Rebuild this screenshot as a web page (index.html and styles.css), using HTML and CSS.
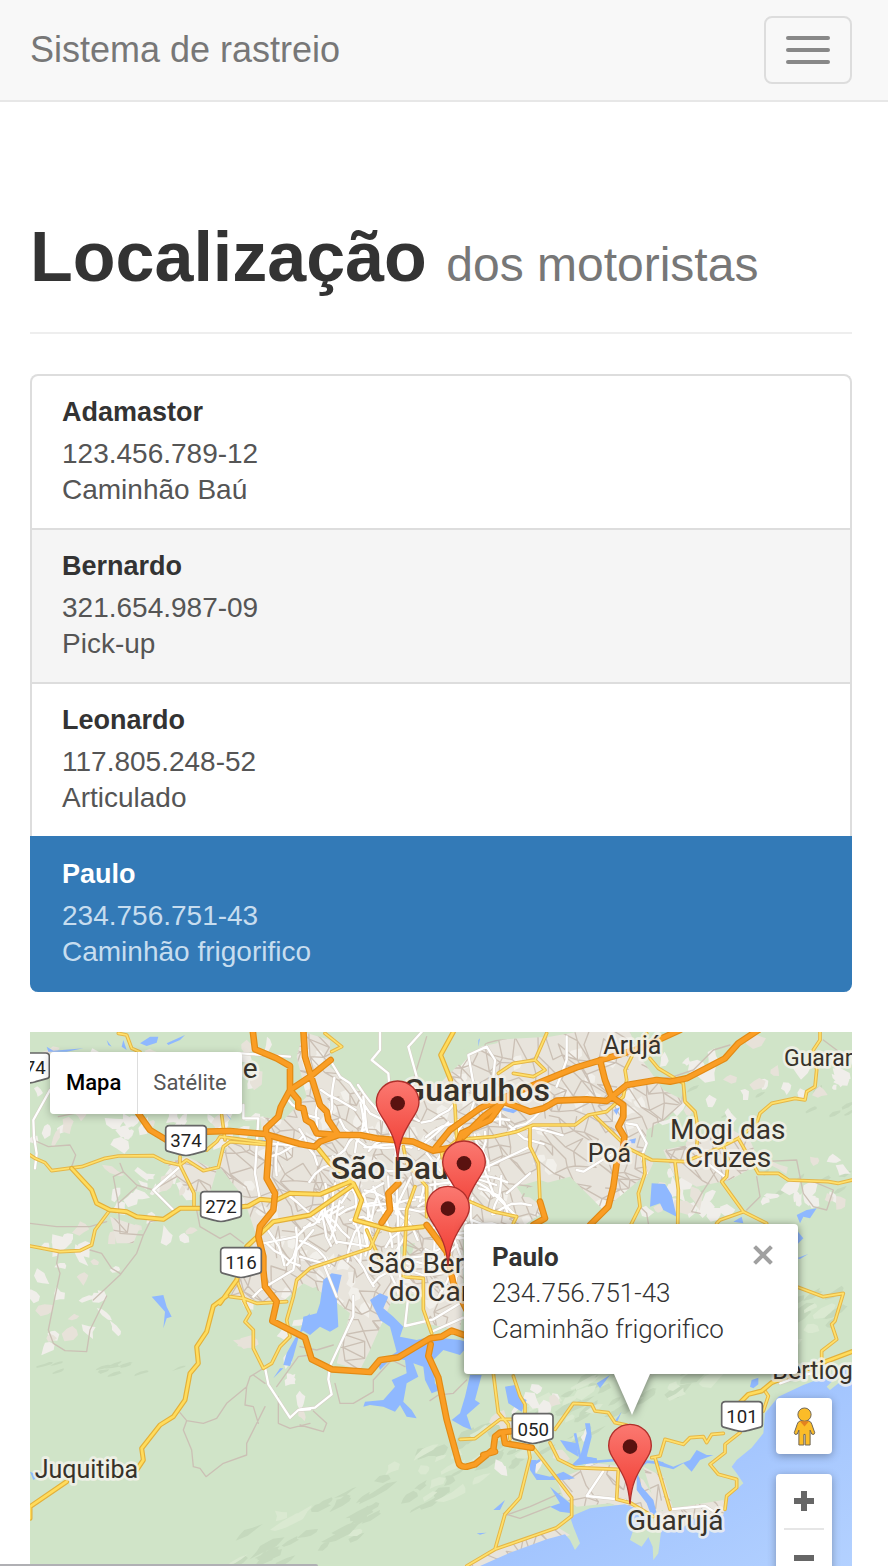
FILE: index.html
```html
<!DOCTYPE html>
<html lang="pt-BR">
<head>
<meta charset="utf-8">
<meta name="viewport" content="width=device-width, initial-scale=1">
<title>Sistema de rastreio</title>
<link rel="stylesheet" href="styles.css">
</head>
<body>
<nav class="navbar">
  <a class="brand" href="#">Sistema de rastreio</a>
  <button class="toggle" type="button" aria-label="Abrir menu"><span class="bar"></span><span class="bar"></span><span class="bar"></span></button>
</nav>
<main class="container">
  <header class="page-header">
    <h1 class="title">Localização <small class="subtitle">dos motoristas</small></h1>
  </header>
  <div class="drivers">
    <a class="driver" href="#"><h4 class="name">Adamastor</h4><p class="info">123.456.789-12<br>Caminhão Baú</p></a>
    <a class="driver hovered" href="#"><h4 class="name">Bernardo</h4><p class="info">321.654.987-09<br>Pick-up</p></a>
    <a class="driver" href="#"><h4 class="name">Leonardo</h4><p class="info">117.805.248-52<br>Articulado</p></a>
    <a class="driver active" href="#"><h4 class="name">Paulo</h4><p class="info">234.756.751-43<br>Caminhão frigorifico</p></a>
  </div>
  <section class="map" aria-label="Mapa">
    <svg class="tiles" viewBox="0 6 2466 1602" preserveAspectRatio="xMinYMin slice">
      <defs>
        <path id="metro" d="M560 400L600 340 700 330 690 260 760 270 830 200 800 80 820 6 900 30 900 110 1010 200 1060 260 1110 160 1230 160 1300 90 1380 30 1560 20 1640 6 1800 6 1830 80 1900 180 1960 210 1900 270 1850 300 1840 440 1720 540 1620 440 1470 480 1550 540 1460 600 1300 600 1300 830 1290 900 1180 880 1180 800 1100 780 1020 960 990 1020 920 1000 960 850 900 800 820 760 740 830 640 800 600 800 680 620 640 500z"/>
        <path id="towns" d="M410 400L470 380 560 420 540 490 470 480zM1900 360L2000 340 2090 290 2160 330 2190 400 2100 450 2000 470 1930 430zM240 560L330 590 310 640 260 640zM1580 1350L1700 1300 1780 1310 1840 1350 1900 1450 1880 1470 1740 1420 1640 1430 1600 1400zM1900 1440L2080 1410 2090 1450 1990 1500 1880 1530 1850 1500zM1300 1608L1390 1560 1580 1490 1620 1515 1500 1560 1380 1608zM1840 1310L1900 1340 1930 1440 1880 1440z"/>
        <clipPath id="urban"><use href="#metro"/></clipPath>
        <clipPath id="town-clip"><use href="#towns"/></clipPath>
        <linearGradient id="sea" x1="0" y1="0" x2="1" y2="1"><stop offset="0" stop-color="#8fb8ff"/><stop offset=".6" stop-color="#a6c7fe"/><stop offset="1" stop-color="#b3d1ff"/></linearGradient>
        <linearGradient id="red" x1="0" y1="0" x2="0" y2="1"><stop offset="0" stop-color="#fb7971"/><stop offset="1" stop-color="#f0392f"/></linearGradient>
        <g id="pin"><path d="M0 172C-5 110-20 85-40 52-55 28-64 15-64-3A64 64 0 0 1 64-3C64 15 55 28 40 52 20 85 5 110 0 172Z" fill="url(#red)" stroke="#b02f2b" stroke-width="4"/><circle r="22" fill="#5a1210"/></g>
        <path id="shield" d="M-61-34Q-61-45-50-45H50Q61-45 61-34V24Q61 30 53 32L20 41Q0 48-20 41L-53 32Q-61 30-61 24Z" fill="#fff" stroke="#666" stroke-width="5"/>
        <g id="rural">
          <path d="M85 260L160 245M10 330L55 350 120 345 137 375 125 410M250 440L280 425 270 400M250 440L265 520 320 470M280 425L320 465 370 480 440 440M265 520L270 610 340 615 360 575 400 568M340 615L320 670 270 735 190 810M0 580L80 590 180 590 230 575M500 540L510 590 570 625 600 610 640 640M180 660L215 670 245 715 270 730M85 670L80 700 90 730 75 800 55 900 70 940 105 962 170 965 180 900 230 798M450 1148L470 1172 520 1180 560 1165 590 1120 650 1070 660 1040 700 1015M470 1172L460 1200 485 1260 490 1310 510 1315 528 1340 580 1300 650 1275 650 1240 705 1130M650 1070L645 1125 670 1130 685 1180M745 1100L745 1180 780 1195 840 1180M740 1070L805 980 840 975M670 1035L705 1060M810 950L860 960 910 945M915 1060L930 1120 970 1120 1030 1085 1030 1050 1085 990 1125 1010M850 1143L890 1180 880 1205 810 1185M1200 1112L1225 1095 1270 1090 1310 1050M1190 20L1150 150M1860 150L1930 140 1990 120 2050 60 2100 45M1960 180L1955 220 1900 270 1870 280 1865 320M1920 390L1935 360 2010 350M2060 420L2015 490 1985 545 2010 550M2180 440L2190 500 2150 540M2190 395L2300 390 2320 490 2350 530 2390 540 2410 480 2350 455M1830 530L1850 550 1855 580M1430 1455L1500 1430 1590 1390M1420 1450L1470 1465 1560 1430M2380 30L2440 75"/>
        </g>
        <g id="local">
          <path d="M60 180L10 270 12 320 20 370 15 415M450 410L370 480 385 495 430 540M630 70L780 80M640 225L640 265 685 265 675 430 690 510M700 640L800 620 840 580M670 800L690 780 790 720 800 660 850 600M970 798L970 858 900 1008 895 1048 905 1093 855 1133 810 1138M705 1013L715 1063 780 1163 805 1140 840 1138M1050 6L1050 60 1025 90 1075 130 1080 190M1175 6L1135 50 1160 140 1130 200M1330 160L1315 75 1370 50 1395 90 1390 140M1610 20L1610 90 1580 170M1135 798L1125 888 1210 868 1290 820M1210 903L1300 863M1720 1323L1670 1398 1785 1410M1920 1438L2025 1428 2060 1450M1640 420L1660 425 1750 370M1790 280L1820 285 1850 340 1835 380 1850 430M2000 340L2020 390 2090 445M2250 1060L2320 1035 2345 1030M900 90L930 140 960 160 1020 250 1080 280M1000 200L1010 300M1100 460L1110 760M1110 760L1180 800M1190 370L1270 470 1270 620 1300 700M1310 380L1360 410 1390 490 1460 560M1500 430L1430 490M1330 430L1500 350M920 635L1020 650M810 680L880 700 920 800M720 340L830 350"/>
          <path d="M990 500L1060 460M995 530L1080 520M1000 490L1020 560M1030 470L1060 550M1050 590L1000 560 960 570M920 640L890 560 940 530"/>
        </g>
        <g id="yellow">
          <path d="M0 375L15 385 45 398 65 422 155 410 225 385 265 378 370 377 405 395 450 405 470 390 520 422 565 412 580 350 600 335 720 345M0 648L90 665 150 662 185 645 195 600 240 540M450 380V405L492 490V535M575 255L585 330M530 360L560 335 570 320 720 340M265 10L290 15 305 55 330 66"/>
          <path d="M620 750L645 815M600 800L640 805 680 820 770 815M640 810L660 850 645 875 670 900 670 955 700 1015 725 1000 750 950 780 920 770 870 790 800 800 750 840 715 1020 655 1050 590"/>
          <path d="M1262 150L1275 230 1280 330 1235 370 1245 430M1550 10L1515 90 1545 120 1510 140 1450 130M1515 90L1450 100 1405 130M905 65L935 50 885 10M1290 328L1390 320 1460 305 1510 285 1635 285 1675 255 1730 245 1780 200 1790 150 1785 120 1810 70 1850 10M1500 290L1500 350 1525 400 1530 515M1120 350L1130 400 1190 470 1190 560M1155 470L1130 540 1120 740 1180 745 1180 838 1205 910M1320 515L1390 545 1460 560 1450 580M1010 600L1050 690"/>
          <path d="M1860 85L1885 115 1960 160 1965 215 1995 245 2005 300 2000 350M1785 350L1865 390 1965 395 2075 350 2125 325 2185 430 2245 430 2275 450 2395 455 2425 460 2466 450M2370 6V30L2350 60 2360 120 2355 170 2330 185 2325 210 2295 205 2225 220 2190 250 2180 280 2125 325M1935 395L1945 480 1943 590M1840 375L1845 430 1825 490 1830 530 1800 590M2080 350L2095 390 2090 440 2075 455 2140 545 2070 570 2060 580M2140 545L2210 580M1695 258L1785 345M2300 770L2380 800 2440 790 2415 873 2405 883 2420 928 2375 963V988M2205 1083L2215 1098 2200 1143"/>
          <path d="M1390 1030L1405 1148 1435 1183 1440 1228M1450 1038L1470 1098 1485 1123V1153M1290 1228L1335 1226 1410 1168 1450 1168M1575 1198L1630 1120 1685 1123 1695 1143 1735 1148 1755 1178 1790 1185M1495 1253L1500 1283 1470 1403 1425 1453 1395 1558M1310 1608L1395 1558 1580 1493 1625 1458V1403L1510 1253M1560 1238L1585 1288 1635 1313 1765 1318 1760 1408 1800 1418 1870 1460M1865 1283L1890 1278 1905 1228 1960 1243 1980 1223 2020 1220 2030 1238 2045 1213 2080 1210M2130 1208L2085 1243V1268L2040 1303 2065 1333 2120 1348V1373L2090 1398 2085 1438M1875 1283L1920 1438"/>
        </g>
        <g id="trunk">
          <path d="M125 415L185 480 200 520 240 540 290 545 320 560 400 568 450 535 510 535M635 530L655 528 690 508 735 512 780 490 870 493 960 455M570 820L620 750 650 650 730 575 840 555 970 465M590 798L550 828 530 905 500 950 505 1000 480 1030 465 1110 430 1160 390 1185 335 1255 340 1290 320 1320M110 1355L0 1430V1465M1270 6L1232 75 1262 150M860 350L900 400 970 460 995 510 975 570 1085 600 1180 590M2466 965L2365 1003 2225 1058 2195 1083 2155 1093 2130 1118"/>
        </g>
        <g id="highway">
          <path d="M668 0L675 58 740 85 780 108V180L752 232 745 260 708 295V310L718 330 710 445 735 490 730 540 690 590 685 620 700 680V720L705 770 740 815 727 873 825 923 845 988 905 1018 1020 1026 1050 990 1105 982 1200 925 1235 920 1265 902 1310 918M820 0L825 80 850 160 870 225 890 245 895 270 925 315M780 180L840 140 902 90M780 180L805 210V232L820 235 828 270 845 280 860 310 925 315M325 250L360 300 410 330M530 305L600 303 705 312 810 342 855 350 870 335 925 315 990 315 1040 325 1150 335 1210 362 1280 350 1295 310 1380 270 1420 215 1500 245 1540 235 1580 212 1670 208 1730 213 1790 165 1880 150 1920 155 1970 145 2085 85 2125 40 2185 0M1210 362L1260 300 1350 235 1450 190 1640 112 1720 88 1830 55 1950 0M1300 320L1360 260 1440 200M1710 90L1725 150 1745 200 1780 225V260L1765 290 1783 320 1780 350 1760 400 1750 470 1735 530 1680 585M1105 460L1075 490 1080 540 1055 578M1190 585L1250 665 1270 760 1310 840M1530 515L1545 565 1510 585M1202 943L1195 978 1225 1043 1250 1168 1285 1295Q1288 1312 1310 1310L1335 1303 1390 1258 1395 1220 1410 1208 1450 1203M1420 1213L1425 1240 1505 1253M1360 1275L1395 1265"/>
        </g>
      </defs>
      <rect y="6" width="2466" height="1602" fill="#d0e4c8"/>
      <g id="terrain"></g>
      <g id="patches"></g>
      <use href="#metro" fill="#e8e4dc"/><use href="#towns" fill="#e8e4dc"/>
      <g id="blocks" clip-path="url(#urban)"></g>
      <path d="M900 110L1010 200 1060 270 1110 160 1210 170 1180 6H920zM1460 470L1530 450 1620 480 1590 510 1480 500zM1300 60L1380 6H1440L1400 40zM1110 640L1155 640 1140 690 1110 670zM830 780L860 770 880 800 830 800zM1350 40L1290 110 1270 90zM700 80L800 130 760 250 690 260z" fill="#d0e4c8"/>
      <g class="rural-line"><use href="#rural"/></g>
      <g id="streets" class="rural-line" clip-path="url(#urban)"></g>
      <g id="town-streets" class="rural-line" clip-path="url(#town-clip)"></g>
      <path class="sea" d="M1350 1608L1440 1568 1550 1528 1605 1513 1620 1530 1635 1560 1650 1540 1630 1490 1620 1460 1680 1435 1785 1423 1830 1440 1870 1462 1810 1500 1800 1530 1835 1550 1870 1500 1950 1500 2000 1460 2080 1455 2095 1400 2140 1360 2120 1330 2105 1310 2120 1290 2165 1253 2200 1210 2205 1150 2245 1100 2320 1065 2466 1010V1608z"/>
      <path d="M1848 1505L1895 1490 1885 1570 1870 1590 1868 1550zM2390 1070L2430 1030 2450 1040 2400 1080z" fill="#d0e4c8"/>
      <g class="water">
        <path d="M880 750L905 730 935 735 920 800 925 890 900 905 870 890 840 915 815 900 820 860 860 850 870 820zM1020 810L1050 790 1075 800 1060 835 1090 860 1120 890 1110 920 1160 930 1200 920 1290 930 1320 940 1290 975 1240 960 1210 990 1215 1060 1230 1080 1205 1090 1185 1050 1180 1010 1150 1000 1165 1040 1130 1060 1120 1115 1145 1140 1160 1165 1130 1160 1110 1125 1095 1145 1060 1130 1020 1125 1000 1130 1005 1115 1060 1110 1095 1070 1085 1050 1130 1030 1125 990 1085 985 1050 1020 1045 1005 1100 965 1080 890 1050 870z"/>
        <path d="M1320 1035L1355 1035 1335 1110 1350 1120 1310 1155 1325 1200 1300 1190 1265 1170 1290 1150 1305 1100zM1425 1070L1455 1065 1470 1100 1490 1110 1475 1145 1435 1120zM840 850L820 870 790 980 780 1008 760 1005 770 970 795 925 830 890zM760 1015L730 1045 750 1015zM365 800L400 795 410 830 425 860 410 865 400 895 405 845zM330 40L360 20H385L380 38 350 48zM410 40L465 15 450 30 415 45zM280 30L290 60 275 50zM230 30L245 50 235 45zM50 50L70 62 160 55 110 65 55 65zM1865 460L1905 462 1925 495 1940 560 1900 540 1890 520 1860 530zM2300 555L2330 540 2360 535 2340 565 2320 560 2310 580zM2300 600L2320 625 2300 645zM2300 685L2335 672 2310 687zM2110 575L2135 560 2140 580zM1750 240L1770 232 1760 255zM1795 330L1818 325 1815 340 1795 340zM1345 30L1350 25 1345 50zM1410 232L1465 240 1450 250 1415 240zM585 245L605 270 598 265zM690 330L710 330 700 340zM0 1325L30 1338 10 1350z"/>
        <path d="M2165 1050L2185 1043 2185 1063 2170 1075 2160 1070zM1500 1290L1520 1290 1515 1330 1560 1340 1600 1325 1635 1345 1600 1350 1520 1350 1500 1320zM1590 1230L1640 1240 1645 1280 1610 1260zM1650 1280L1670 1210 1665 1180 1680 1180 1685 1220 1670 1280 1700 1285V1295L1620 1310zM1560 1370L1620 1420 1625 1450 1590 1445 1560 1430 1590 1420zM1880 1290L1930 1310 1980 1290 2000 1260 2030 1275 2050 1275 2010 1290 1985 1325 1960 1300 1930 1318 1880 1305zM1820 1320L1835 1370 1870 1410 1880 1450 1865 1460 1850 1420 1820 1380zM1390 1440L1425 1410 1410 1440zM1340 1510L1370 1508 1350 1514zM1700 1060L1740 1035 1710 1075zM1750 1178L1775 1145 1760 1180z"/>
        <path class="stream" d="M1635 1210L1650 1280 1700 1290M1500 1310L1530 1290M1830 1310L1850 1295 1900 1300M1635 1300L1760 1290"/>
      </g>
      <g class="line local-case"><use href="#local"/></g><g class="line local-fill"><use href="#local"/></g>
      <g class="line yellow-case"><use href="#yellow"/></g><g class="line yellow-fill"><use href="#yellow"/></g>
      <g class="line trunk-case"><use href="#trunk"/></g><g class="line trunk-fill"><use href="#trunk"/></g>
      <g class="line highway-case"><use href="#highway"/></g><g class="line highway-fill"><use href="#highway"/></g>
      <use href="#shield" x="468" y="332"/><use href="#shield" x="573" y="530"/><use href="#shield" x="633" y="698"/><use href="#shield" x="-3" y="114"/><use href="#shield" x="1508" y="1196"/><use href="#shield" x="2136" y="1160"/>
      <g class="route">
        <text x="468" y="351">374</text><text x="573" y="549">272</text><text x="633" y="717">116</text><text x="0" y="133">374</text><text x="1510" y="1217">050</text><text x="2136" y="1179">101</text>
      </g>
      <g class="place">
        <text class="city" x="1120" y="213">Guarulhos</text><text class="city" x="902" y="446">São Paulo</text>
        <text class="town" x="1013" y="729">São Bernardo</text><text class="town" x="1076" y="813">do Campo</text>
        <text class="town" x="1920" y="328">Mogi das</text><text class="town" x="1965" y="412">Cruzes</text>
        <text class="village" x="1720" y="71">Arujá</text><text class="village" x="1673" y="397">Poá</text>
        <text class="hamlet" x="2262" y="107">Guararema</text><text class="village" x="14" y="1343">Juquitiba</text>
        <text class="village" x="2227" y="1048">Bertioga</text><text class="town" x="1791" y="1501">Guarujá</text>
        <text class="town" x="638" y="143">e</text>
      </g>
      <use href="#pin" x="1103" y="220"/><use href="#pin" x="1302" y="400"/><use href="#pin" x="1254" y="536"/><use href="#pin" x="1800" y="1250"/>
    </svg>
    <div class="types"><button class="type selected" type="button">Mapa</button><button class="type" type="button">Satélite</button></div>
    <div class="popup">
      <button class="close" type="button" aria-label="Fechar"><svg viewBox="0 0 20 20" width="20" height="20"><path d="M3 3L17 17M17 3L3 17" stroke="#a0a0a0" stroke-width="4" stroke-linecap="square"/></svg></button>
      <strong>Paulo</strong><br>234.756.751-43<br>Caminhão frigorifico
      <svg class="tail" viewBox="0 0 36 42" width="36" height="42"><path d="M0 0H36L18 41Z" fill="#fff"/></svg>
    </div>
    <div class="controls">
      <button class="pegman" type="button" aria-label="Street View"><svg viewBox="0 0 68 118" width="23" height="39"><g fill="#fbbc28" stroke="#6e6556" stroke-width="3"><path d="M21 42H47Q54 44 56 52L65 78Q64 86 56 82L51 70V115H36V83H32V115H17V70L12 82Q4 86 3 78L12 52Q14 44 21 42Z"/><circle cx="34" cy="23" r="20"/></g><path d="M20 43H48L34 59Z" fill="#e4821f"/></svg></button>
      <div class="zoom"><button class="zoom-btn" type="button" aria-label="Aumentar zoom"><svg viewBox="0 0 22 22" width="22" height="22"><path d="M11 1V21M1 11H21" stroke="#666" stroke-width="6"/></svg></button><button class="zoom-btn" type="button" aria-label="Diminuir zoom"><svg viewBox="0 0 22 22" width="22" height="22"><path d="M1 11H21" stroke="#666" stroke-width="6"/></svg></button></div>
    </div>
  </section>
</main>
<div class="status"></div>
<script src="map.js"></script>
</body>
</html>
```
FILE: styles.css
```css
* { box-sizing: border-box; }
body { margin: 0; min-height: 100vh; display: flex; flex-direction: column; background: #fff; color: #333; font-family: "Liberation Sans", sans-serif; font-size: 28px; line-height: 36px; }
button { border: 0; padding: 0; background: #fff; font: inherit; display: flex; align-items: center; justify-content: center; }
a { text-decoration: none; }
.navbar { display: flex; align-items: center; justify-content: space-between; height: 102px; padding: 0 36px 0 30px; background: #f8f8f8; border-bottom: 2px solid #e7e7e7; }
.brand { color: #777; font-size: 36px; line-height: 40px; }
.toggle { flex-direction: column; gap: 8px; width: 88px; height: 68px; border: 2px solid #ddd; border-radius: 8px; background: transparent; }
.bar { width: 44px; height: 4px; border-radius: 2px; background: #888; }
.container { flex: 1; display: flex; flex-direction: column; padding: 116px 36px 0 30px; }
.page-header { padding-bottom: 36px; border-bottom: 2px solid #eee; margin-bottom: 40px; }
.title { margin: 0; font-size: 70px; line-height: 78px; font-weight: bold; white-space: nowrap; }
.subtitle { font-size: 48px; line-height: 48px; font-weight: normal; color: #777; }
.drivers { margin-bottom: 40px; }
.driver { display: block; padding: 18px 30px 20px; border: 2px solid #ddd; border-bottom: 0; color: #555; background: #fff; }
.driver:first-child { border-radius: 8px 8px 0 0; }
.driver.hovered { background: #f5f5f5; }
.driver.active { padding-bottom: 22px; background: #337ab7; border-color: #337ab7; color: #c7ddef; border-radius: 0 0 8px 8px; }
.name { margin: 0 0 6px; font-size: 27px; line-height: 36px; color: #333; }
.active .name { color: #fff; }
.info { margin: 0; }
.map { position: relative; flex: 1; min-height: 534px; overflow: hidden; font-family: Roboto, sans-serif; }
.tiles { position: absolute; inset: 0; width: 100%; height: 100%; }
.sea { fill: url(#sea); }
.water { fill: #8fb8ff; }
.stream { fill: none; stroke: #8fb8ff; stroke-width: 8; }
.line, .rural-line, .rural-line path { fill: none; stroke-linejoin: round; stroke-linecap: round; }
.rural-line { stroke: #cbc0b5; stroke-width: 4; }
.local-case { stroke: #d5cec5; stroke-width: 10; }
.local-fill { stroke: #fff; stroke-width: 7; }
.yellow-case { stroke: #e5b647; stroke-width: 11; }
.yellow-fill { stroke: #ffe06b; stroke-width: 5; }
.trunk-case { stroke: #e3b03a; stroke-width: 15; }
.trunk-fill { stroke: #ffdc5c; stroke-width: 8; }
.highway-case { stroke: #e28a14; stroke-width: 20; }
.highway-fill { stroke: #fa9e25; stroke-width: 13; }
.route { font-size: 56px; fill: #222; text-anchor: middle; }
.place { fill: #37322a; stroke: #f5f3ed; stroke-opacity: .8; stroke-width: 16; stroke-linejoin: round; paint-order: stroke; }
.city { font-size: 96px; font-weight: 500; }
.town { font-size: 84px; }
.village { font-size: 75px; }
.hamlet { font-size: 69px; }
.types { position: absolute; left: 20px; top: 20px; display: flex; box-shadow: 0 2px 8px rgba(0, 0, 0, .25); border-radius: 4px; overflow: hidden; }
.type { height: 62px; padding: 0 15px; font-size: 22px; color: #565656; }
.type.selected { padding: 0 16px; font-weight: 500; color: #000; border-right: 1px solid #ddd; }
.popup { position: absolute; left: 434px; top: 192px; width: 334px; height: 150px; padding: 15px 28px; background: #fff; border-radius: 4px; font-size: 26px; font-weight: 300; line-height: 36px; filter: drop-shadow(0 2px 4px rgba(0, 0, 0, .5)); }
.popup strong { font-weight: 700; }
.close { position: absolute; right: 25px; top: 21px; }
.tail { position: absolute; left: 150px; top: 150px; }
.controls { position: absolute; right: 20px; top: 366px; width: 56px; display: flex; flex-direction: column; gap: 20px; }
.pegman, .zoom { border-radius: 4px; box-shadow: 0 2px 8px rgba(0, 0, 0, .3); }
.pegman { height: 56px; }
.zoom { background: #fff; padding: 0 8px; }
.zoom-btn { width: 40px; height: 56px; background: transparent; }
.zoom-btn:first-child { border-bottom: 2px solid #e6e6e6; }
.status { position: fixed; left: 0; bottom: 0; width: 318px; height: 2px; background: #b0b0b4; border-radius: 0 4px 0 0; }
```
FILE: map.js
```js
// Seeded generator keeps the terrain and street mesh identical on every load.
let seed = 11;
const rnd = () => (seed = (seed * 16807) % 2147483647) / 2147483647;
const NS = "http://www.w3.org/2000/svg";
function add(id, d, fill) {
  const p = document.createElementNS(NS, "path");
  p.setAttribute("d", d);
  if (fill) p.setAttribute("fill", fill);
  document.getElementById(id).appendChild(p);
}
function blob(x, y, rx, ry, tilt) {
  const n = 7, pts = [];
  for (let i = 0; i < n; i++) {
    const a = i / n * 6.283, r = 0.4 + rnd() * 0.8;
    const u = Math.cos(a) * rx * r, v = Math.sin(a) * ry * r;
    pts.push(Math.round(x + u * Math.cos(tilt) - v * Math.sin(tilt)) + " " + Math.round(y + u * Math.sin(tilt) + v * Math.cos(tilt)));
  }
  return "M" + pts.join("L") + "z";
}
// Ridge shading along the coastal range.
let dark = "", light = "";
for (let i = 0; i < 150; i++) {
  const t = rnd(), x = 620 + t * 1800, y = 1600 - t * 800 + (rnd() - 0.5) * 170;
  const b = blob(x, y, 20 + rnd() * 45, 6 + rnd() * 14, -0.5);
  if (i % 3) dark += b; else light += b;
}
for (let i = 0; i < 24; i++) dark += blob(1980 + rnd() * 480, 160 + rnd() * 110 + (i % 3) * 230, 24, 7, -0.5);
for (let i = 0; i < 12; i++) dark += blob(20 + rnd() * 440, 1030 - rnd() * 30, 26, 5, -0.3);
add("terrain", dark, "#c5d9bd");
add("terrain", light, "#dae9d1");
// Fields and clearings: x, y, width, height, count.
let fields = "", soil = "";
for (const [x, y, w, h, n] of [[0, 60, 560, 300, 34], [0, 560, 280, 400, 26], [240, 260, 400, 370, 38], [560, 40, 160, 250, 12], [1840, 10, 270, 560, 44], [2130, 20, 330, 180, 14], [2200, 380, 240, 150, 15], [640, 800, 180, 380, 10], [1390, 1060, 330, 260, 16], [1300, 40, 500, 90, 14]]) {
  for (let i = 0; i < n; i++) {
    const b = blob(x + rnd() * w, y + rnd() * h, 14 + rnd() * 24, 10 + rnd() * 20, rnd() * 3);
    if (i % 4) fields += b; else soil += b;
  }
}
add("patches", fields, "#f0eeea");
add("patches", soil, "#e7e2d9");
let blocks = "";
for (let i = 0; i < 170; i++) blocks += blob(600 + rnd() * 1260, 40 + rnd() * 980, 24, 20, rnd() * 3);
add("blocks", blocks, "#f2f0eb");
// Irregular street mesh inside the built-up areas.
function mesh(id, x0, y0, x1, y1, s) {
  const rows = [];
  for (let y = y0; y <= y1; y += s) {
    const row = [];
    for (let x = x0; x <= x1; x += s) row.push([Math.round(x + (rnd() - 0.5) * s), Math.round(y + (rnd() - 0.5) * s)]);
    rows.push(row);
  }
  let d = "";
  rows.forEach((row, j) => row.forEach((p, i) => {
    for (const q of [row[i + 1], rows[j + 1] && rows[j + 1][i], rows[j + 1] && rows[j + 1][i + 1]]) {
      if (q && rnd() < 0.5) d += `M${p[0]} ${p[1]}L${q[0]} ${q[1]}`;
    }
  }));
  add(id, d);
}
mesh("streets", 540, 0, 1980, 1040, 38);
mesh("town-streets", 240, 280, 2220, 1608, 44);
// Avenues between the main districts.
let avenues = "";
for (let i = 0; i < 110; i++) {
  let x = 740 + rnd() * 780, y = 240 + rnd() * 500, a = rnd() * 6.283;
  if (x > 1400 && y > 400) continue;
  avenues += `M${Math.round(x)} ${Math.round(y)}`;
  for (let k = 0; k < 4; k++) {
    a += (rnd() - 0.5) * 0.9;
    x += Math.cos(a) * 30;
    y += Math.sin(a) * 30;
    avenues += `L${Math.round(x)} ${Math.round(y)}`;
  }
}
add("local", avenues);
```
